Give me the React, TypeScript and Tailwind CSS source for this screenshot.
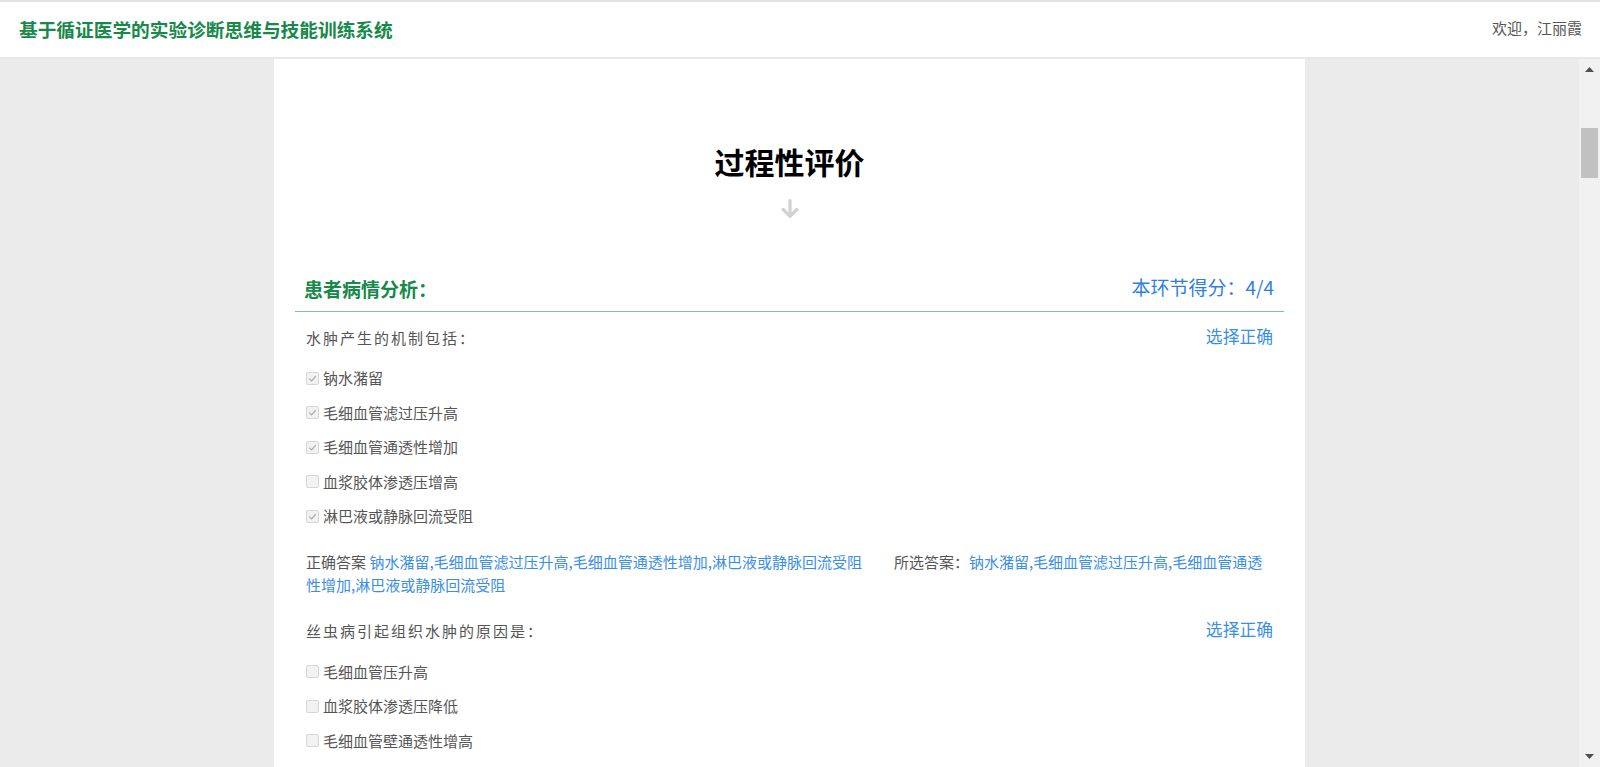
import React from "react";

const FONT = { fontFamily: '"Noto Sans CJK SC", "Microsoft YaHei", sans-serif' };

function CheckBox({ checked }: { checked: boolean }) {
  return (
    <span className="w-[13px] h-[13px] shrink-0 rounded-[2px] border border-[#d6d6d6] bg-[#f2f2f2] flex items-center justify-center">
      {checked && (
        <svg width="9" height="9" viewBox="0 0 10 10">
          <path d="M1.5 5.2 L4 7.6 L8.6 2.4" fill="none" stroke="#a9a9a9" strokeWidth="1.3" />
        </svg>
      )}
    </span>
  );
}

function Option({ label, checked }: { label: string; checked: boolean }) {
  return (
    <div className="h-[34.5px] flex items-center gap-[4px]">
      <CheckBox checked={checked} />
      <span className="text-[15px] leading-[20px] text-[#555]">{label}</span>
    </div>
  );
}

function QuestionHead({ text }: { text: string }) {
  return (
    <div className="flex items-center justify-between h-[24px]">
      <span className="text-[15px] tracking-[2px] text-[#555]">{text}</span>
      <span className="text-[16.8px] text-[#3a8ee6] mb-[3px]">选择正确</span>
    </div>
  );
}

export default function App() {
  const q1 = [
    { label: "钠水潴留", checked: true },
    { label: "毛细血管滤过压升高", checked: true },
    { label: "毛细血管通透性增加", checked: true },
    { label: "血浆胶体渗透压增高", checked: false },
    { label: "淋巴液或静脉回流受阻", checked: true },
  ];
  const q2 = [
    { label: "毛细血管压升高", checked: false },
    { label: "血浆胶体渗透压降低", checked: false },
    { label: "毛细血管壁通透性增高", checked: false },
  ];
  return (
    <div style={FONT} className="w-[1600px] h-[767px] overflow-hidden flex flex-col bg-[#ebebeb]">
      <header className="shrink-0 h-[59px] bg-white border-t-2 border-t-[#e2e2e2] border-b-2 border-b-[#e8e8e8] flex items-center justify-between pl-[19px] pr-[18px]">
        <h1 className="text-[18.7px] font-bold text-[#17894a] leading-none">基于循证医学的实验诊断思维与技能训练系统</h1>
        <span className="text-[15px] text-[#555] mb-[2px]">欢迎，江丽霞</span>
      </header>
      <div className="flex-1 flex min-h-0">
        <main className="flex-1 min-w-0 overflow-hidden">
          <div className="w-[1031px] mx-auto bg-white h-full px-[21px]">
            <div className="pt-[82px] flex flex-col items-center">
              <h2 className="text-[30px] font-bold text-black leading-[40px]">过程性评价</h2>
              <svg className="mt-[17px]" width="22" height="22" viewBox="0 0 24 24">
                <path d="M12 3 V20 M4.5 12.5 L12 20 L19.5 12.5" fill="none" stroke="#d2d2d2" strokeWidth="3.6" strokeLinecap="round" strokeLinejoin="round" />
              </svg>
            </div>
            <div className="mt-[53px] h-[30px] flex items-center justify-between pl-[9px] pr-[10px]">
              <span className="text-[19px] font-bold text-[#17894a] mt-[2px]">患者病情分析：</span>
              <span className="text-[19px] text-[#2f7fe0] mb-[2px]">本环节得分：4/4</span>
            </div>
            <div className="mt-[8px] h-px bg-[#80bf9b]" />
            <div className="px-[11px]">
              <div className="mt-[14px]">
                <QuestionHead text="水肿产生的机制包括：" />
              </div>
              <div className="mt-[11px] flex flex-col">
                {q1.map((o) => (
                  <Option key={o.label} {...o} />
                ))}
              </div>
              <p className="mt-[16px] text-[15px] leading-[23px] text-[#555]">
                正确答案 <span className="text-[#3a8ee6]">钠水潴留,毛细血管滤过压升高,毛细血管通透性增加,淋巴液或静脉回流受阻</span>
                <span className="ml-[32px]">所选答案：</span>
                <span className="text-[#3a8ee6]">钠水潴留,毛细血管滤过压升高,毛细血管通透性增加,淋巴液或静脉回流受阻</span>
              </p>
              <div className="mt-[24px]">
                <QuestionHead text="丝虫病引起组织水肿的原因是：" />
              </div>
              <div className="mt-[11px] flex flex-col">
                {q2.map((o) => (
                  <Option key={o.label} {...o} />
                ))}
              </div>
            </div>
          </div>
        </main>
        <aside className="w-[21px] shrink-0 bg-[#f1f1f1] flex flex-col">
          <div className="h-[21px] flex items-center justify-center">
            <svg width="9" height="5" viewBox="0 0 9 5"><path d="M0 5 L4.5 0 L9 5 Z" fill="#505050" /></svg>
          </div>
          <div className="h-[48px]" />
          <div className="h-[50px] mx-[2px] bg-[#c1c1c1]" />
          <div className="flex-1" />
          <div className="h-[21px] flex items-center justify-center">
            <svg width="9" height="5" viewBox="0 0 9 5"><path d="M0 0 L9 0 L4.5 5 Z" fill="#505050" /></svg>
          </div>
        </aside>
      </div>
    </div>
  );
}
